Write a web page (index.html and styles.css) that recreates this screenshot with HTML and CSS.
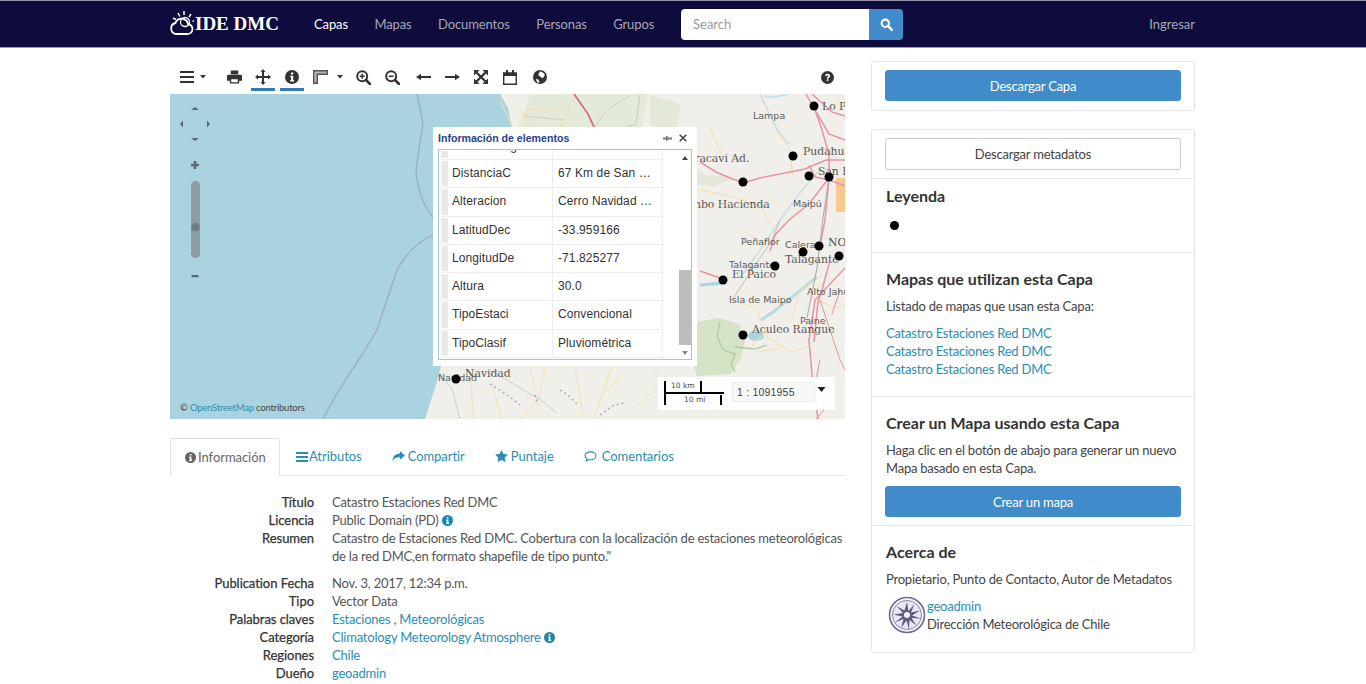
FILE: index.html
```html
<!DOCTYPE html>
<html lang="es">
<head>
<meta charset="utf-8">
<title>Catastro Estaciones Red DMC</title>
<link rel="stylesheet" href="styles.css">
</head>
<body>
<header class="navbar">
  <div class="wrap nav-inner">
    <a class="brand">
      <svg class="brand-icon" viewBox="0 0 24 26"><g fill="none" stroke="#fff" stroke-width="1.8"><path d="M6 24h11a5 5 0 0 0 1-10 6.5 6.5 0 0 0-12.500-1A5.600 5.600 0 0 0 6 24z"/><circle cx="15" cy="12" r="4.500" stroke-width="1.300"/><path d="M14 1v4M8 3l2 3.500M3 8l3 1.500M21 4l-2 3M22.500 11h1.500" stroke-width="1.500"/></g></svg>
      <span>IDE DMC</span>
    </a>
    <nav class="nav-links">
      <a class="active">Capas</a><a>Mapas</a><a>Documentos</a><a>Personas</a><a>Grupos</a>
    </nav>
    <form class="search">
      <input class="search-input" placeholder="Search">
      <button class="search-btn" type="button"><svg viewBox="0 0 16 16" width="13" height="13"><circle cx="6.500" cy="6.500" r="4.500" fill="none" stroke="#fff" stroke-width="2.600"/><path d="M10 10l4.500 4.500" stroke="#fff" stroke-width="3" stroke-linecap="round"/></svg></button>
    </form>
    <a class="login">Ingresar</a>
  </div>
</header>

<main class="wrap layout">
  <section class="left">
    <div class="toolbar">
      <button class="tool menu">
        <svg viewBox="0 0 14 12" width="14" height="12"><path d="M0 1h14M0 6h14M0 11h14" stroke="#333" stroke-width="2"/></svg>
        <svg class="caret" viewBox="0 0 6 4" width="6" height="4"><path d="M0 0h6L3 3.500z" fill="#333"/></svg>
      </button>
      <button class="tool"><svg viewBox="0 0 16 14" width="15" height="14"><path d="M4 0h8v4H4zM1.500 4.500h13A1.500 1.500 0 0 1 16 6v5h-3v3H3v-3H0V6a1.500 1.500 0 0 1 1.500-1.500zM4.500 9.500V12.500h7V9.500z" fill="#333" fill-rule="evenodd"/></svg></button>
      <button class="tool on"><svg viewBox="0 0 16 16" width="16" height="16"><path d="M8 0l2.500 3H9v4h4V5.500L16 8l-3 2.500V9H9v4h1.500L8 16l-2.500-3H7V9H3v1.500L0 8l3-2.500V7h4V3H5.500z" fill="#333"/></svg></button>
      <button class="tool on"><svg viewBox="0 0 14 14" width="14" height="14"><circle cx="7" cy="7" r="7" fill="#333"/><path d="M6 2.500h2.200v2H6zM5.300 5.800h2.900v4.100h.9v1.500H5.200V9.900h.9V7.300h-.8z" fill="#fff"/></svg></button>
      <button class="tool menu wide">
        <svg viewBox="0 0 15 14" width="15" height="14"><path d="M0 0h15v5H5v9H0z" fill="#555"/><path d="M1.400 1.400h12.200v2.200H3.600v9H1.400z" fill="#b5b5b5"/></svg>
        <svg class="caret" viewBox="0 0 6 4" width="6" height="4"><path d="M0 0h6L3 3.500z" fill="#333"/></svg>
      </button>
      <button class="tool"><svg viewBox="0 0 15 15" width="15" height="15"><circle cx="6.200" cy="6.200" r="5" fill="none" stroke="#333" stroke-width="2"/><path d="M10 10l4 4" stroke="#333" stroke-width="2.600" stroke-linecap="round"/><path d="M3.700 6.200h5M6.200 3.700v5" stroke="#333" stroke-width="1.500"/></svg></button>
      <button class="tool"><svg viewBox="0 0 15 15" width="15" height="15"><circle cx="6.200" cy="6.200" r="5" fill="none" stroke="#333" stroke-width="2"/><path d="M10 10l4 4" stroke="#333" stroke-width="2.600" stroke-linecap="round"/><path d="M3.700 6.200h5" stroke="#333" stroke-width="1.500"/></svg></button>
      <button class="tool t-left"><svg viewBox="0 0 15 8" width="15" height="8"><path d="M15 3.100H5V.8L0 4l5 3.200V4.900h10z" fill="#333"/></svg></button>
      <button class="tool"><svg viewBox="0 0 15 8" width="15" height="8"><path d="M0 3.100h10V.8L15 4l-5 3.200V4.900H0z" fill="#333"/></svg></button>
      <button class="tool"><svg viewBox="0 0 14 14" width="14" height="14"><path d="M0 0h5.500L0 5.500zM14 0v5.500L8.500 0zM0 14V8.500L5.500 14zM14 14H8.500L14 8.500z" fill="#333"/><path d="M2.500 2.500l9 9M11.500 2.500l-9 9" stroke="#333" stroke-width="2.400"/></svg></button>
      <button class="tool t-cal"><svg viewBox="0 0 14 15" width="14" height="15"><path d="M.7 3h12.600v11.300H.7z" fill="none" stroke="#333" stroke-width="1.400"/><path d="M1 3h12v3H1zM3 0h2v4H3zM9 0h2v4H9z" fill="#333"/></svg></button>
      <button class="tool"><svg viewBox="0 0 14 14" width="14" height="14"><circle cx="7" cy="7" r="7" fill="#333"/><path d="M7 1.500c2 .3 3.500 1.200 4.800 3l-1 2.700-2 1-1.300-1.700-2-1 .2-2zM3 9l2.300.4L6.500 12l-1 1C4 12 3 10.800 3 9z" fill="#fff"/></svg></button>
      <button class="tool help"><svg viewBox="0 0 14 14" width="13" height="13"><circle cx="7" cy="7" r="7" fill="#333"/><path d="M4.400 5.300C4.600 3.700 5.700 3 7.100 3c1.500 0 2.700.9 2.700 2.300 0 1.800-1.900 1.800-1.900 3H6.200c0-2 1.800-2.100 1.800-3 0-.5-.4-.8-1-.8-.6 0-.9.300-1.100 1zM6.200 9h1.700v1.800H6.200z" fill="#fff"/></svg></button>
    </div>

    <div class="map">
      <svg class="map-art" viewBox="170 94 675 325" preserveAspectRatio="none">
        <rect x="170" y="94" width="675" height="325" fill="#aad3df"/>
        <path d="M500 94l8 14 4 19-40 80-18 70-5 60-8 29-5 19-11 34h428V94z" fill="#f1efe9"/>
        <path d="M417 94L423 123 416 170C418 195 425 208 433 217M433 235C415 243 405 255 397 270L377 330C360 360 340 385 323 419" fill="none" stroke="#9fa9c7" stroke-width="1.300"/>
        <path d="M530 94h118l-6 33H520z" fill="#e3ead8"/>
        <path d="M640 94l-4 30-30 10" fill="none" stroke="#c9c9c0"/>
        <path d="M650 96c12 2 25 4 30 9l-6 40 30 30 30 2-20 10-34-5-30-60z" fill="#dde6d0" opacity=".7"/>
        <path d="M697 322l22-4 20 6 6 16-4 18-10 16-34 2-10-30z" fill="#d5e3c6"/>
        <path d="M720 322l-3 14 6 14 12 4-4 10 4 8M735 347l20 2 12-4" fill="none" stroke="#a9cf9c" stroke-width="1.300"/>
        <rect x="836" y="178" width="9" height="34" fill="#f7c98f"/>
        <path d="M817 277l-20 16-24 19-12 8" fill="none" stroke="#b7dbe5" stroke-width="3"/>
        <path d="M700 285l23-2" fill="none" stroke="#aad3df" stroke-width="3"/>
        <ellipse cx="756" cy="336" rx="8" ry="5" fill="#aad3df"/>
        <path d="M760 94c14 30 18 40 30 50M764 96c10 2 16 0 25-2M820 170c-20 20-40 50-60 80l-20 28" fill="none" stroke="#c7dee6" stroke-width="1.500"/>
        <path d="M775 130l14 16 4 30M700 190l30 6 30 10 10 18M742 230l24 16M710 128l14 32M822 276l-22 14-8 30" fill="none" stroke="#f5dda6" stroke-width="1"/>
        <path d="M732 300l24 8 12 30 24 14 18-6M770 330l-18 14 6 8 22-4M825 280l-15 16 25 12 10-3M520 110l14 20M515 130l14-22 20 4 20-8M560 128l10-20M500 100l12 26M470 375l4 44M492 385l10 34M530 366l5 22M545 367l-6 30-18 22M575 366l8 50M612 366l-14 42-5 11M630 366l-28 30M655 370l10 10-30 28" fill="none" stroke="#f6dfaf" stroke-width="1"/>
        <path d="M440 375l12 14 8 30M490 370l25 15 24 14 18 14" fill="none" stroke="#b7c7c9" stroke-width=".8"/>
        <path d="M574 94l14 20 6 13" fill="none" stroke="#d8707e" stroke-width="1.800"/>
        <path d="M630 96c-20 10-30 20-36 34M524 116l40 4" fill="none" stroke="#d5cfc3"/>
        <path d="M700 162l16 10 14 6 13 5 17-5 30-6 15-3 21-9h19M806 94l9 16 7 20 7 25v23l-4 42-5 26M809 165l6 12 14 3 16 6M829 178l-20 26-20 16-14 15-5 16M700 271l23 8M845 268l-30 32-6 40 3 35 6 44M830 260l-8 30-4 12-4 40M812 94l20 18 13 4M815 110l14 24 16 6" fill="none" stroke="#e893a4" stroke-width="1.500"/>
        <path d="M829 178l-6 40-6 50-10 50" fill="none" stroke="#a9a9a9" stroke-width="1"/>
        <path d="M780 220l-8 20-40 60" fill="none" stroke="#c4bfa4" stroke-width="1"/>
        <path d="M490 384l8 5 12 8 10 8M535 395l3 10M600 415l14-10 10-2M560 390l8 5 10 10" fill="none" stroke="#b7a0c8" stroke-width="1.400" stroke-dasharray="2 3"/>
        <path d="M840 290l-8 24M820 300l20 60 5 10M820 360l-4 20M826 408l-10 11" fill="none" stroke="#e893a4" stroke-width="1"/>
        <g class="lbl-s">
          <text x="753" y="119">Lampa</text>
          <text x="741" y="245">Peñaflor</text>
          <text x="785" y="248">Calera</text>
          <text x="793" y="207">Maipú</text>
          <text x="729" y="268">Talagante</text>
          <text x="729" y="303">Isla de Maipo</text>
          <text x="807" y="295">Alto Jahuel</text>
          <text x="800" y="324">Paine</text>
          <text x="438" y="381">Navidad</text>
        </g>
        <g class="lbl-b">
          <text x="822" y="110">Lo Prado</text>
          <text x="803" y="155">Pudahuel</text>
          <text x="818" y="175">San Bernardo</text>
          <text x="679" y="162">Curacavi Ad.</text>
          <text x="669" y="208">Colimbo Hacienda</text>
          <text x="828" y="246">NOS</text>
          <text x="785" y="263">Talagante</text>
          <text x="732" y="278">El Paico</text>
          <text x="752" y="333">Aculeo Rangue</text>
          <text x="465" y="377">Navidad</text>
        </g>
        <g fill="#000">
          <circle cx="814" cy="106" r="4.500"/><circle cx="793" cy="156" r="4.500"/><circle cx="809" cy="176" r="4.500"/><circle cx="829" cy="177" r="4.500"/><circle cx="743" cy="182" r="4.500"/><circle cx="819" cy="246" r="4.500"/><circle cx="803" cy="252" r="4.500"/><circle cx="775" cy="266" r="4.500"/><circle cx="839" cy="256" r="4.500"/><circle cx="723" cy="280" r="4.500"/><circle cx="743" cy="335" r="4.500"/><circle cx="456" cy="379" r="4.500"/>
        </g>
        <g fill="#5c6a70">
          <path d="M195 107l4 3h-8zM180 124l3-3.500v7zM210 124l-3-3.500v7zM195 141l-4-3h8z"/>
          <path d="M193.700 161h2.600v2.700h2.700v2.600h-2.700v2.700h-2.600v-2.700H191v-2.600h2.700zM191.500 275h7v2.200h-7z"/>
        </g>
        <rect x="191" y="181" width="9" height="77" rx="4.500" fill="#8d9da3"/>
        <circle cx="195.500" cy="227" r="4.300" fill="#727c80"/>
      </svg>
      <div class="attrib">© <a>OpenStreetMap</a> contributors</div>

      <div class="scale-box">
        <div class="scale-line">
          <span class="km">10 km</span>
          <span class="mi">10 mi</span>
        </div>
        <div class="scale-select">1 : 1091955</div>
        <svg class="scale-caret" viewBox="0 0 8 5" width="9" height="5"><path d="M0 0h8L4 5z" fill="#222"/></svg>
      </div>

      <div class="popup">
        <div class="popup-head">
          <span>Información de elementos</span>
          <span class="popup-actions">
            <svg viewBox="0 0 9 7" width="9" height="7"><path d="M0 2.500h3V1h1.500v1.500H9v2H4.500V6H3V4.500H0z" fill="#6f7a86"/></svg>
            <svg viewBox="0 0 8 8" width="8" height="8"><path d="M.7.7l6.600 6.600M7.300.7L.7 7.300" stroke="#444" stroke-width="1.500"/></svg>
          </span>
        </div>
        <div class="popup-body">
          <div class="grid-rows">
            <div class="row cut"><i></i><b>DistanciaSg</b><em></em></div>
            <div class="row"><i></i><b>DistanciaC</b><em>67 Km de San …</em></div>
            <div class="row"><i></i><b>Alteracion</b><em>Cerro Navidad …</em></div>
            <div class="row"><i></i><b>LatitudDec</b><em>-33.959166</em></div>
            <div class="row"><i></i><b>LongitudDe</b><em>-71.825277</em></div>
            <div class="row"><i></i><b>Altura</b><em>30.0</em></div>
            <div class="row"><i></i><b>TipoEstaci</b><em>Convencional</em></div>
            <div class="row"><i></i><b>TipoClasif</b><em>Pluviométrica</em></div>
          </div>
          <div class="scroll">
            <svg class="arrow up" viewBox="0 0 6 4" width="6" height="4"><path d="M3 0l3 4H0z" fill="#444"/></svg>
            <div class="thumb"></div>
            <svg class="arrow" viewBox="0 0 6 4" width="6" height="4"><path d="M3 4l3-4H0z" fill="#888"/></svg>
          </div>
        </div>
      </div>
    </div>

    <ul class="tabs">
      <li class="tab active"><svg class="ti i-info" viewBox="0 0 14 14" width="11" height="11"><circle cx="7" cy="7" r="7" fill="currentColor"/><path d="M6 2.500h2.200v2H6zM5.300 5.800h2.900v4.100h.9v1.500H5.200V9.900h.9V7.300h-.8z" fill="#fff"/></svg>Información</li>
      <li class="tab"><svg class="ti i-bars" viewBox="0 0 12 10" width="12" height="10"><path d="M0 1h12M0 5h12M0 9h12" stroke="currentColor" stroke-width="1.800"/></svg>Atributos</li>
      <li class="tab"><svg class="ti i-share" viewBox="0 0 14 12" width="13" height="11"><path d="M8.500 0L14 4.800 8.500 9.500V6.800C4.500 6.800 2 7.700.5 11.500.5 6.200 3.500 3 8.500 2.800z" fill="currentColor"/></svg>Compartir</li>
      <li class="tab"><svg class="ti i-star" viewBox="0 0 14 13" width="13" height="12"><path d="M7 0l2.100 4.400 4.900.6-3.600 3.400.9 4.800L7 10.900 2.700 13.200l.9-4.800L0 5l4.900-.6z" fill="currentColor"/></svg>Puntaje</li>
      <li class="tab"><svg class="ti i-comment" viewBox="0 0 14 12" width="13" height="11"><path d="M7 1c3.300 0 6 1.900 6 4.300S10.300 9.600 7 9.600c-.7 0-1.300-.1-1.900-.2L2.500 11l.6-2.600C1.800 7.600 1 6.500 1 5.300 1 2.900 3.700 1 7 1z" fill="none" stroke="currentColor" stroke-width="1.200"/></svg>Comentarios</li>
    </ul>

    <dl class="meta">
      <dt>Título</dt><dd>Catastro Estaciones Red DMC</dd>
      <dt>Licencia</dt><dd>Public Domain (PD) <svg class="info" viewBox="0 0 14 14" width="11" height="11"><circle cx="7" cy="7" r="7" fill="currentColor"/><path d="M6 2.500h2.200v2H6zM5.300 5.800h2.900v4.100h.9v1.500H5.200V9.900h.9V7.300h-.8z" fill="#fff"/></svg></dd>
      <dt>Resumen</dt><dd class="gap">Catastro de Estaciones Red DMC. Cobertura con la localización de estaciones meteorológicas de la red DMC,en formato shapefile de tipo punto."</dd>
      <dt>Publication Fecha</dt><dd>Nov. 3, 2017, 12:34 p.m.</dd>
      <dt>Tipo</dt><dd>Vector Data</dd>
      <dt>Palabras claves</dt><dd><a>Estaciones</a> , <a>Meteorológicas</a></dd>
      <dt>Categoría</dt><dd><a>Climatology Meteorology Atmosphere</a> <svg class="info" viewBox="0 0 14 14" width="11" height="11"><circle cx="7" cy="7" r="7" fill="currentColor"/><path d="M6 2.500h2.200v2H6zM5.300 5.800h2.900v4.100h.9v1.500H5.200V9.900h.9V7.300h-.8z" fill="#fff"/></svg></dd>
      <dt>Regiones</dt><dd><a>Chile</a></dd>
      <dt>Dueño</dt><dd><a>geoadmin</a></dd>
    </dl>
  </section>

  <aside class="right">
    <div class="card card-top">
      <a class="btn btn-primary">Descargar Capa</a>
    </div>
    <div class="card">
      <div class="sec sec-meta"><a class="btn btn-default">Descargar metadatos</a></div>
      <div class="sec sec-legend">
        <h4>Leyenda</h4>
        <span class="legend-dot"></span>
      </div>
      <div class="sec sec-maps">
        <h4>Mapas que utilizan esta Capa</h4>
        <p class="sub">Listado de mapas que usan esta Capa:</p>
        <a>Catastro Estaciones Red DMC</a>
        <a>Catastro Estaciones Red DMC</a>
        <a>Catastro Estaciones Red DMC</a>
      </div>
      <div class="sec sec-create">
        <h4>Crear un Mapa usando esta Capa</h4>
        <p class="sub">Haga clic en el botón de abajo para generar un nuevo Mapa basado en esta Capa.</p>
        <a class="btn btn-primary">Crear un mapa</a>
      </div>
      <div class="sec sec-about">
        <h4>Acerca de</h4>
        <p class="sub">Propietario, Punto de Contacto, Autor de Metadatos</p>
        <div class="owner">
          <svg class="avatar" viewBox="0 0 38 38" width="38" height="38">
            <circle cx="19" cy="19" r="17.500" fill="#f4f4f8" stroke="#6f6a94" stroke-width="1.600"/>
            <circle cx="19" cy="19" r="14.500" fill="#e8e9f0" stroke="#8a87a8" stroke-width="1"/>
            <path d="M19 6l1.500 9 6-7-3.500 8.500 9-2-8 5 9 3-9.500-.5 5 7.500-7-5.500-.5 9.500-2.500-9-5.500 7.500 2.500-9-8.500 3.500 7.500-6-9-2 9.500-1.500-6.500-7 8 4.500z" fill="#5d5a85"/>
            <circle cx="19" cy="19" r="3" fill="#f4f4f8"/>
          </svg>
          <div><a>geoadmin</a><span>Dirección Meteorológica de Chile</span></div>
        </div>
      </div>
    </div>
  </aside>
</main>
</body>
</html>
```

FILE: styles.css
```css
* { box-sizing: border-box; }
html, body { margin: 0; padding: 0; height: 684px; overflow: hidden; background: #fff; }
body { font-family: "Lato", "Liberation Sans", sans-serif; font-size: 13px; line-height: 18px; color: #444; letter-spacing: -.22px; }
a { color: #2a8db3; text-decoration: none; }
.wrap { width: 1026px; margin-left: 170px; }

.navbar { height: 48px; background: #0e0b3d; border-top: 1px solid #8f8fa5; border-bottom: 1px solid #9a9aa8; }
.nav-inner { display: flex; align-items: center; height: 46px; position: relative; }
.brand { display: flex; align-items: center; width: 144px; color: #fff; font-family: "Liberation Serif", serif; font-weight: bold; font-size: 19px; letter-spacing: 0; }
.brand-icon { width: 24px; height: 26px; margin-right: 1px; margin-top: -3px; }
.nav-links { display: flex; gap: 26.500px; width: 367px; letter-spacing: -.12px; }
.nav-links a { color: #a8a8b4; font-size: 13px; }
.nav-links a.active { color: #fff; }
.search { display: flex; height: 31px; width: 222px; }
.search-input { width: 188px; height: 31px; border: 0; border-radius: 4px 0 0 4px; padding: 0 12px; font: 13px "Lato", sans-serif; background: #fff; }
.search-input::placeholder { color: #999; }
.search-btn { width: 34px; height: 31px; border: 0; background: #428bca; border-radius: 0 4px 4px 0; display: flex; align-items: center; justify-content: center; padding: 0; }
.login { margin-left: auto; color: #a8a8b4; font-size: 13px; margin-right: 1px; letter-spacing: 0; }

.layout { display: flex; gap: 26px; }
.left { width: 675px; flex: none; }
.right { width: 324px; flex: none; padding-top: 13px; }

.toolbar { display: flex; align-items: flex-start; height: 43px; padding: 18px 0 0 5px; gap: 5px; }
.tool { width: 24px; height: 25px; padding: 0; margin: 0; border: 0; border-bottom: 3px solid transparent; background: none; display: flex; align-items: center; justify-content: center; gap: 6px; }
.tool.menu { width: 32px; margin-right: 8px; margin-left: 2px; }
.tool.wide { width: 34px; margin: 0 1px 0 2px; gap: 8.500px; }
.tool.on { border-bottom-color: #337ab7; }
.tool.t-left { margin-left: 2px; }
.tool.t-cal { margin-left: 0; margin-right: 1px; }
.tool.help { margin-left: auto; margin-right: 6px; }
.caret { flex: none; }

.map { position: relative; width: 675px; height: 325px; margin-top: 3px; overflow: hidden; }
.map-art { display: block; width: 675px; height: 325px; }
.lbl-s text { font: 9.500px "DejaVu Sans", sans-serif; fill: #5d5d5d; letter-spacing: 0; }
.lbl-b text { font: 10.800px "DejaVu Serif", serif; fill: #222; stroke: #f1efe9; stroke-width: .2px; letter-spacing: 0; }
.attrib { position: absolute; left: 10px; bottom: 4px; font-size: 9.500px; line-height: 14px; color: #444; }

.scale-box { position: absolute; left: 488px; top: 283px; width: 177px; height: 33px; background: rgba(255,255,255,.93); letter-spacing: 0; }
.scale-line { position: absolute; left: 6px; top: 4px; width: 58px; height: 24px; font: 7.500px/10px "DejaVu Sans", sans-serif; color: #444; border-left: 2px solid #000; }
.scale-line::before { content: ""; position: absolute; left: 0; top: 11px; width: 58px; height: 2px; background: #000; }
.km { position: absolute; left: 5px; top: 0; width: 31px; height: 12px; border-right: 2px solid #000; }
.mi { position: absolute; left: 18px; top: 14px; width: 38px; height: 10px; border-right: 2px solid #000; }
.scale-select { position: absolute; left: 74px; top: 5px; width: 83px; height: 20px; background: #f8f8f8; border: 1px solid #eee; padding-left: 4px; font: 10.500px/18px "Liberation Sans", sans-serif; letter-spacing: .2px; color: #444; }
.scale-caret { position: absolute; left: 159px; top: 10px; }

.popup { position: absolute; left: 263px; top: 33px; width: 264px; height: 239px; background: #fff; padding: 0 5px 6px 5px; letter-spacing: 0; }
.popup-head { height: 22px; display: flex; align-items: center; justify-content: space-between; font: bold 10.600px "Liberation Sans", sans-serif; color: #25448b; padding-right: 5px; }
.popup-actions { display: flex; gap: 7px; align-items: center; }
.popup-body { display: flex; height: 211px; border: 1px solid #a9c3de; overflow: hidden; }
.grid-rows { width: 224px; padding-left: 2px; }
.row { display: flex; height: 28.300px; border-bottom: 1px solid #ededed; font: 12px/27px "Liberation Sans", sans-serif; color: #333; letter-spacing: .1px; }
.row.cut { height: 10px; line-height: 0; overflow: hidden; }
.row.cut b { margin-top: -4px; }
.row i { width: 7px; margin: 1px 0; background: #e9e9e9; border-left: 1px solid #f5f5f5; flex: none; }
.row b { font-weight: normal; width: 105px; padding-left: 4px; border-right: 1px solid #ededed; flex: none; }
.row em { font-style: normal; padding-left: 5px; width: 110px; border-right: 1px solid #ededed; }
.scroll { width: 15px; margin-left: 15px; display: flex; flex-direction: column; align-items: center; justify-content: space-between; padding: 4px 0; background: #fff; position: relative; }
.thumb { position: absolute; left: 1px; top: 120px; width: 13px; height: 75px; background: #bdbdbd; }
.arrow { flex: none; }
.arrow.up { margin-top: 2px; }

.tabs { list-style: none; display: flex; margin: 19px 0 0; padding: 0; height: 38px; border-bottom: 1px solid #e3e3e3; letter-spacing: -.05px; }
.tab { padding: 0 15px; height: 38px; line-height: 37px; color: #2a8db3; white-space: nowrap; }
.tab.active { color: #666; width: 110px; margin-right: 1px; border: 1px solid #e3e3e3; border-bottom: 1px solid #fff; border-radius: 3px 3px 0 0; padding: 0 14px; }
.ti { vertical-align: -1px; }
.i-info { margin-right: 2px; }
.i-bars { margin-right: 1px; }
.i-share { margin-right: 3px; }
.i-star { margin-right: 3px; }
.i-comment { margin-right: 5px; }

.meta { display: grid; grid-template-columns: 144px 513px; column-gap: 18px; margin: 17px 0 0; }
.meta dt { text-align: right; color: #333; font-weight: normal; -webkit-text-stroke: .25px #333; letter-spacing: -.05px; }
.meta dd { margin: 0; color: #555; }
.meta dd.gap { margin-bottom: 9px; }
.info { color: #1b86ab; vertical-align: -1px; }

.card { border: 1px solid #e6e6e6; border-radius: 3px; margin-bottom: 18px; }
.card-top { padding: 8px 13px; height: 50px; }
.btn { display: block; width: 296px; text-align: center; border-radius: 3px; font-size: 13px; }
.btn-primary { height: 31px; line-height: 30px; background: #428bca; color: #fff; border: 1px solid #428bca; }
.btn-default { height: 32px; line-height: 30px; background: #fff; color: #444; border: 1px solid #ccc; margin-left: -1px; }
.sec { padding: 0 14px; border-bottom: 1px solid #e6e6e6; }
.sec .btn-primary { margin-left: -1px; }
.sec:last-child { border-bottom: 0; }
.sec h4 { margin: 0; font-size: 16px; line-height: 20px; font-weight: bold; color: #333; letter-spacing: 0; }
.sec .sub { margin: 0; }
.sec-meta { height: 49px; padding-top: 8px; }
.sec-legend { height: 74px; padding-top: 7px; }
.legend-dot { display: block; width: 9px; height: 9px; border-radius: 50%; background: #000; margin: 15px 0 0 4px; }
.sec-maps { height: 144px; padding-top: 16px; }
.sec-maps .sub { margin: 8px 0 9px; }
.sec-maps a { display: block; }
.sec-create { height: 129px; padding-top: 16px; }
.sec-create .sub { margin: 8px 0 9px; }
.sec-about { height: 126px; padding-top: 16px; }
.sec-about .sub { margin: 8px 0 8px; }
.owner { display: flex; align-items: center; gap: 1px; padding-left: 2px; }
.owner > div { display: flex; flex-direction: column; }
.owner span { color: #444; }
```
